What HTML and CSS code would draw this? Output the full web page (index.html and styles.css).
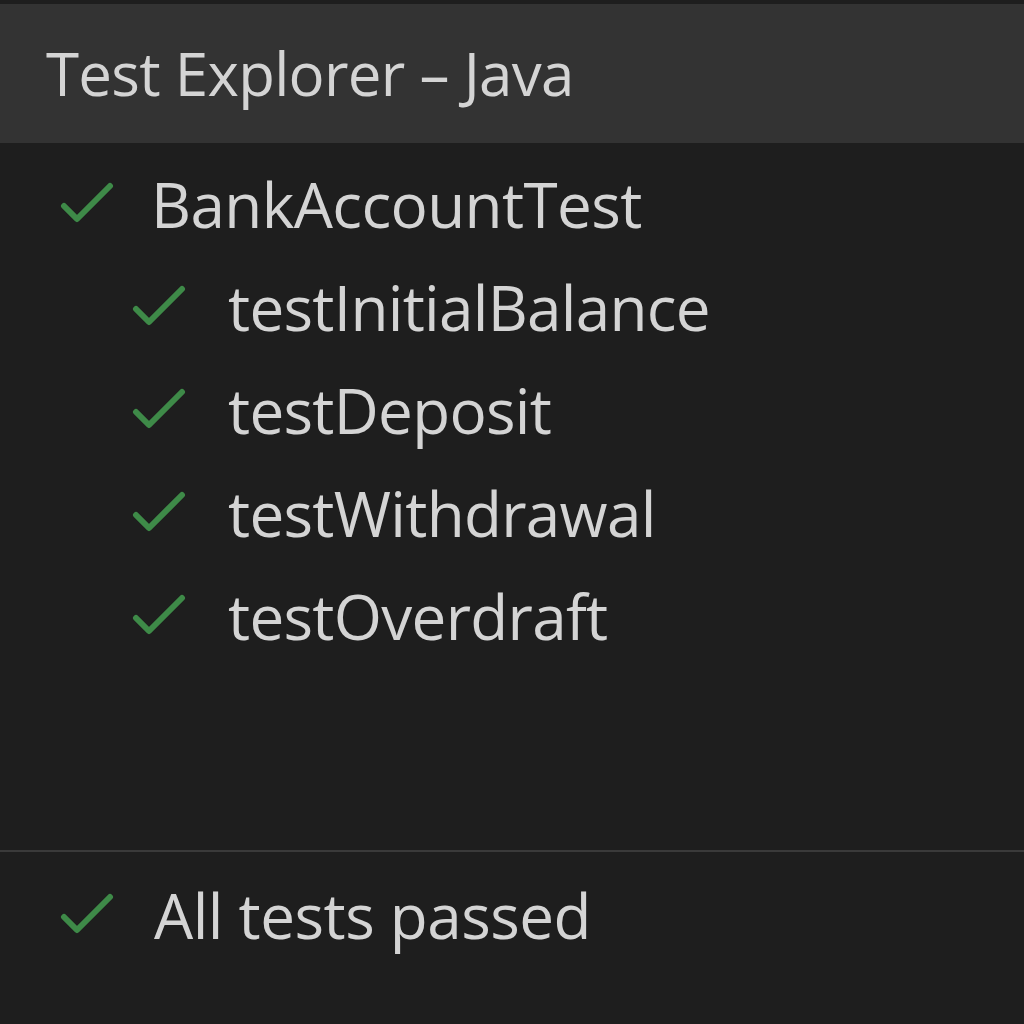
FILE: index.html
```html
<!DOCTYPE html>
<html>
<head>
<meta charset="utf-8">
<link rel="stylesheet" href="styles.css">
</head>
<body>
<div class="app">
  <div class="topstrip"></div>
  <header class="header">Test Explorer – Java</header>
  <main class="tree">
    <div class="row level0">
      <svg class="check" viewBox="0 0 54 44"><path d="M4 24 L17 37 L50 4"/></svg>
      <span class="label">BankAccountTest</span>
    </div>
    <div class="row level1">
      <svg class="check" viewBox="0 0 54 44"><path d="M4 24 L17 37 L50 4"/></svg>
      <span class="label">testInitialBalance</span>
    </div>
    <div class="row level1">
      <svg class="check" viewBox="0 0 54 44"><path d="M4 24 L17 37 L50 4"/></svg>
      <span class="label">testDeposit</span>
    </div>
    <div class="row level1">
      <svg class="check" viewBox="0 0 54 44"><path d="M4 24 L17 37 L50 4"/></svg>
      <span class="label">testWithdrawal</span>
    </div>
    <div class="row level1">
      <svg class="check" viewBox="0 0 54 44"><path d="M4 24 L17 37 L50 4"/></svg>
      <span class="label">testOverdraft</span>
    </div>
  </main>
  <footer class="footer">
    <div class="row level0 summary">
      <svg class="check" viewBox="0 0 54 44"><path d="M4 24 L17 37 L50 4"/></svg>
      <span class="label">All tests passed</span>
    </div>
  </footer>
</div>
</body>
</html>
```
FILE: styles.css
```css
html, body {
  margin: 0;
  padding: 0;
  background: #1e1e1e;
}
.app {
  width: 1024px;
  height: 1024px;
  display: flex;
  flex-direction: column;
  background: #1e1e1e;
  font-family: "Open Sans", "Noto Sans", sans-serif;
  color: #d4d4d4;
  overflow: hidden;
}
.topstrip {
  height: 4px;
  background: #1e1e1e;
}
.header {
  height: 139px;
  background: #333333;
  box-sizing: border-box;
  padding-left: 46px;
  padding-top: 27px;
  font-size: 60px;
  line-height: 84px;
  letter-spacing: -0.7px;
  color: #d4d4d4;
}
.tree {
  flex: 1;
  padding-top: 9px;
  display: flex;
  flex-direction: column;
}
.row {
  height: 103px;
  display: flex;
  align-items: center;
}
.level0 {
  padding-left: 60px;
}
.level1 {
  padding-left: 132px;
}
.check {
  width: 54px;
  height: 44px;
  flex: none;
  fill: none;
  stroke: #3e8a48;
  stroke-width: 6;
  stroke-linecap: round;
  stroke-linejoin: round;
}
.label {
  font-size: 62px;
  line-height: 84px;
  margin-left: 37px;
  letter-spacing: -0.6px;
  color: #d4d4d4;
}
.level1 .label {
  margin-left: 42px;
  letter-spacing: -0.7px;
}
.footer {
  border-top: 2px solid #3a3a3a;
  height: 174px;
  box-sizing: border-box;
  padding-top: 11px;
}
.summary .label {
  margin-left: 40px;
  letter-spacing: -0.5px;
}
```
